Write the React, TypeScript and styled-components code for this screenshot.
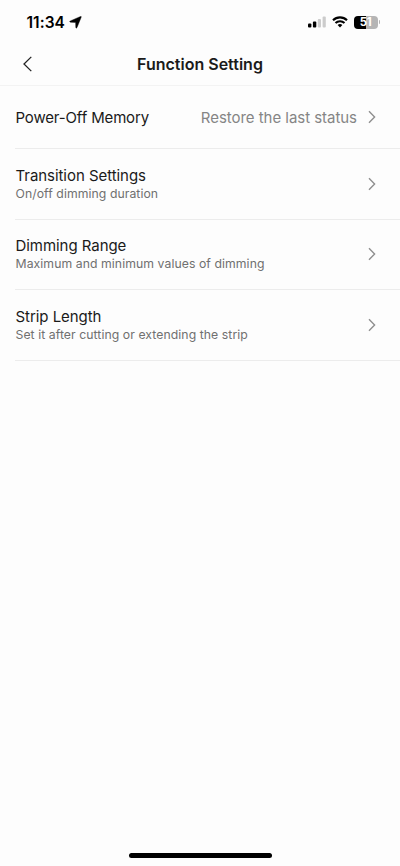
import React from "react";
import styled, { createGlobalStyle } from "styled-components";

const GlobalStyle = createGlobalStyle`
  * { box-sizing: border-box; }
  body { margin: 0; background: #fdfdfd; }
`;

const Screen = styled.div`
  display: flex;
  flex-direction: column;
  width: 400px;
  height: 866px;
  background: #fdfdfd;
  color: #1a1a1a;
  font-family: Inter, "Liberation Sans", sans-serif;
  overflow: hidden;
`;

const StatusBar = styled.div`
  display: flex;
  align-items: center;
  justify-content: space-between;
  height: 44px;
  padding: 0 20px 0 26.5px;
`;

const Clock = styled.div`
  display: flex;
  align-items: center;
  gap: 4px;
  color: #000;
  font-size: 15.5px;
  font-weight: 600;
  letter-spacing: 0.05px;
  line-height: 21px;
`;

const Indicators = styled.div`
  display: flex;
  align-items: center;
  gap: 6px;
`;

const Battery = styled.div`
  display: flex;
  align-items: center;
  gap: 1px;
`;

const BatteryBody = styled.div`
  display: flex;
  align-items: center;
  justify-content: center;
  width: 24px;
  height: 13px;
  border-radius: 4px;
  background: linear-gradient(to right, #000 51%, #b5b5b5 51%);
  color: #fff;
  font-size: 11.5px;
  font-weight: 700;
  letter-spacing: -0.3px;
  line-height: 13px;
`;

const BatteryTip = styled.div`
  width: 1.5px;
  height: 4px;
  border-radius: 0 2px 2px 0;
  background: #b5b5b5;
`;

const NavBar = styled.header`
  display: grid;
  grid-template-columns: 55px 1fr 55px;
  align-items: center;
  height: 42px;
  padding-bottom: 2px;
  border-bottom: 1px solid #f3f3f3;
`;

const BackButton = styled.button`
  display: flex;
  height: 38px;
  padding: 0 0 0 22px;
  align-items: center;
  border: 0;
  background: none;
  color: #222;
`;

const Title = styled.h1`
  margin: 0;
  text-align: center;
  font-size: 16px;
  font-weight: 600;
  line-height: 22px;
  letter-spacing: 0;
`;

const List = styled.main`
  flex: 1;
  padding-left: 15px;
`;

const Row = styled.div<{ $height: number }>`
  display: flex;
  align-items: center;
  height: ${(p) => p.$height}px;
  padding-right: 23px;
  padding-bottom: ${(p) => (p.$height % 2 === 0 ? 1 : 0)}px;
  border-bottom: 1px solid #ececec;
`;

const Labels = styled.div`
  flex: 1;
  padding-left: 0.5px;
`;

const Label = styled.div<{ $tight: boolean }>`
  font-size: 15px;
  line-height: 19px;
  letter-spacing: ${(p) => (p.$tight ? "-0.15px" : "-0.05px")};
`;

const Hint = styled.div`
  color: #707070;
  font-size: 12.25px;
  line-height: 17px;
  letter-spacing: 0.06px;
`;

const Value = styled.div`
  margin-right: 10px;
  color: #858585;
  font-size: 15px;
  line-height: 19px;
  letter-spacing: -0.04px;
`;

const HomeArea = styled.footer`
  display: flex;
  justify-content: center;
  height: 13px;
`;

const HomeIndicator = styled.div`
  width: 143px;
  height: 5px;
  border-radius: 3px;
  background: #000;
`;

const Chevron = () => (
  <svg width="10" height="14" viewBox="0 0 10 14" fill="none">
    <path d="M2 1.2 7.6 7 2 12.8" stroke="#8f8f8f" strokeWidth="1.4" />
  </svg>
);

const rows = [
  { label: "Power-Off Memory", value: "Restore the last status", height: 63 },
  { label: "Transition Settings", hint: "On/off dimming duration", height: 71 },
  { label: "Dimming Range", hint: "Maximum and minimum values of dimming", height: 70 },
  { label: "Strip Length", hint: "Set it after cutting or extending the strip", height: 71 },
];

export default function App() {
  return (
    <Screen>
      <GlobalStyle />
      <StatusBar>
        <Clock>
          <span>11:34</span>
          <svg width="13" height="13" viewBox="0 0 13 13">
            <path d="M11.5.5Q12.6.1 12.2 1.2L8 11.6Q7.2 12.8 6.8 11.4L6.6 6.5 1.4 6.2Q-.1 5.6 1.3 4.9Z" fill="#000" stroke="#000" strokeWidth=".4" strokeLinejoin="round" />
          </svg>
        </Clock>
        <Indicators>
          <svg width="18" height="12" viewBox="0 0 18 12">
            <rect x="0" y="7.5" width="3.4" height="4" rx="1" fill="#000" />
            <rect x="4.9" y="5.5" width="3.4" height="6" rx="1" fill="#000" />
            <rect x="9.8" y="3" width="3.2" height="8.5" rx="1" fill="#ccc" />
            <rect x="14.6" y="0.4" width="3.2" height="11.1" rx="1" fill="#ccc" />
          </svg>
          <svg width="16" height="12" viewBox="0 0 16 12" fill="none">
            <path d="M1 4.2a10 10 0 0 1 14 0M3.5 7a6.5 6.5 0 0 1 9 0" stroke="#000" strokeWidth="2.1" />
            <path d="M5.6 9.1a3.6 3.6 0 0 1 4.8 0L8 11.5Z" fill="#000" />
          </svg>
          <Battery>
            <BatteryBody>51</BatteryBody>
            <BatteryTip />
          </Battery>
        </Indicators>
      </StatusBar>
      <NavBar>
        <BackButton aria-label="Back">
          <svg width="11" height="16" viewBox="0 0 11 16" fill="none">
            <path d="M9.3.9 2 8l7.3 7.1" stroke="currentColor" strokeWidth="1.3" />
          </svg>
        </BackButton>
        <Title>Function Setting</Title>
      </NavBar>
      <List>
        {rows.map((row) => (
          <Row key={row.label} $height={row.height}>
            <Labels>
              <Label $tight={!row.hint}>{row.label}</Label>
              {row.hint && <Hint>{row.hint}</Hint>}
            </Labels>
            {row.value && <Value>{row.value}</Value>}
            <Chevron />
          </Row>
        ))}
      </List>
      <HomeArea>
        <HomeIndicator />
      </HomeArea>
    </Screen>
  );
}
